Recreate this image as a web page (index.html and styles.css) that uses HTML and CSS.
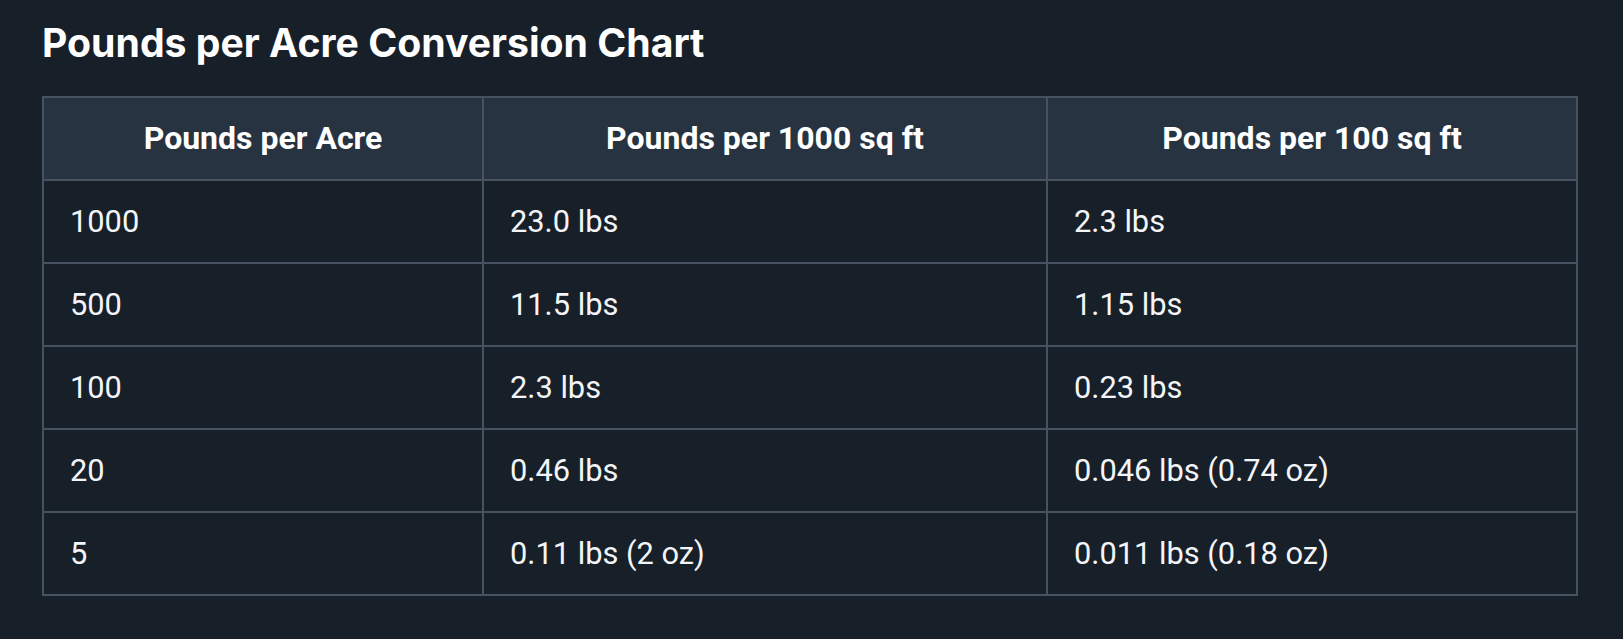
FILE: index.html
```html
<!DOCTYPE html>
<html lang="en">
<head>
<meta charset="utf-8">
<title>Pounds per Acre Conversion Chart</title>
<link rel="stylesheet" href="styles.css">
</head>
<body>
<main class="page">
  <h2 class="title">Pounds per Acre Conversion Chart</h2>
  <table class="chart">
    <colgroup>
      <col class="c1"><col class="c2"><col class="c3">
    </colgroup>
    <thead>
      <tr><th>Pounds per Acre</th><th>Pounds per 1000 sq ft</th><th>Pounds per 100 sq ft</th></tr>
    </thead>
    <tbody>
      <tr><td>1000</td><td>23.0 lbs</td><td>2.3 lbs</td></tr>
      <tr><td>500</td><td>11.5 lbs</td><td>1.15 lbs</td></tr>
      <tr><td>100</td><td>2.3 lbs</td><td>0.23 lbs</td></tr>
      <tr><td>20</td><td>0.46 lbs</td><td>0.046 lbs (0.74 oz)</td></tr>
      <tr><td>5</td><td>0.11 lbs (2 oz)</td><td>0.011 lbs (0.18 oz)</td></tr>
    </tbody>
  </table>
</main>
</body>
</html>
```
FILE: styles.css
```css
html, body {
  margin: 0;
  padding: 0;
  background: #171f29;
}
.page {
  padding: 19px 45px 0 42px;
  color: #f5f7fa;
}
.title {
  margin: 0 0 29px;
  font-family: Inter, "Liberation Sans", sans-serif;
  font-weight: 700;
  font-size: 39.2px;
  line-height: 48px;
  color: #ffffff;
}
.chart {
  width: 1536px;
  border-collapse: collapse;
  table-layout: fixed;
  font-family: Roboto, "Liberation Sans", sans-serif;
  font-size: 30.8px;
  line-height: 33px;
  color: #f3f5f8;
}
.c1 { width: 440px; }
.c2 { width: 564px; }
.chart th,
.chart td {
  border: 2px solid #475261;
  padding: 24px 26px;
}
.chart th {
  background: #283342;
  font-weight: 700;
  font-size: 32px;
  text-align: center;
  color: #ffffff;
}
.chart td {
  text-align: left;
}
```
